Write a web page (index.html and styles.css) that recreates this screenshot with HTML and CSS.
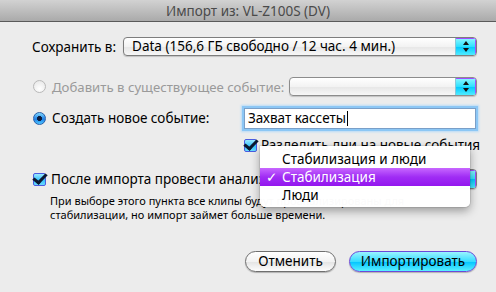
FILE: index.html
```html
<!DOCTYPE html>
<html lang="ru">
<head>
    <meta charset="UTF-8">
    <title>Импорт из: VL-Z100S (DV)</title>
    <link rel="stylesheet" href="styles.css">
</head>
<body>
    <div class="window">
        <header class="titlebar">Импорт из: VL-Z100S (DV)</header>
        <main class="content">
            <div class="row row-save">
                <span class="label">Сохранить в:</span>
                <div class="popup popup-wide">
                    <span class="popup-text">Data (156,6 ГБ свободно / 12 час. 4 мин.)</span>
                    <span class="popup-arrows"><i class="up"></i><i class="down"></i></span>
                </div>
            </div>

            <div class="row row-add">
                <span class="radio disabled"></span>
                <span class="label muted label-add">Добавить в существующее событие:</span>
                <div class="popup popup-event">
                    <span class="popup-text"></span>
                    <span class="popup-arrows"><i class="up"></i><i class="down"></i></span>
                </div>
            </div>

            <div class="row row-new">
                <span class="radio checked"></span>
                <span class="label label-new">Создать новое событие:</span>
                <div class="field">Захват кассеты<span class="caret"></span></div>
            </div>

            <div class="row row-split">
                <span class="checkbox"></span>
                <span class="label">Разделить дни на новые события</span>
            </div>

            <div class="row row-analyze">
                <span class="checkbox"></span>
                <span class="label label-analyze">После импорта провести анализ для:</span>
                <div class="popup popup-analyze">
                    <span class="popup-text">Стабилизация</span>
                    <span class="popup-arrows"><i class="up"></i><i class="down"></i></span>
                </div>
            </div>

            <p class="hint">При выборе этого пункта все клипы будут проанализированы для<br>стабилизации, но импорт займет больше времени.</p>

            <div class="buttons">
                <button class="btn">Отменить</button>
                <button class="btn btn-default">Импортировать</button>
            </div>

            <ul class="menu">
                <li>Стабилизация и люди</li>
                <li class="selected"><span class="tick">✓</span>Стабилизация</li>
                <li>Люди</li>
            </ul>
        </main>
    </div>
</body>
</html>
```

FILE: styles.css
```css
body {
    margin: 0;
    font-family: 'Noto Sans', 'DejaVu Sans', sans-serif;
    font-size: 13.5px;
    color: #000;
    background: #ececec;
}

.window {
    width: 496px;
    height: 292px;
    overflow: hidden;
    background: #ececec;
}

.titlebar {
    height: 22px;
    line-height: 22px;
    text-align: center;
    color: #4a4a4a;
    font-size: 13.5px;
    background: linear-gradient(#d2d2d2, #aaaaaa);
    border-bottom: 1px solid #5a5a5a;
    box-sizing: border-box;
}

.content {
    position: relative;
    padding: 15px 19px 0 32px;
}

.row {
    display: flex;
    align-items: center;
}

.label {
    white-space: nowrap;
}

.muted {
    color: #9a9a9a;
}

/* popup buttons */
.popup {
    display: flex;
    height: 19px;
    box-sizing: border-box;
    border: 1px solid #7d7d7d;
    border-radius: 4px;
    background: linear-gradient(#ffffff, #f3f3f3 50%, #e6e6e6 51%, #f7f7f7);
    box-shadow: 0 1px 1px rgba(0, 0, 0, 0.18);
    overflow: hidden;
}

.popup-text {
    flex: 1;
    padding-left: 8px;
    line-height: 17px;
    white-space: nowrap;
    overflow: hidden;
}

.popup-arrows {
    width: 20px;
    display: flex;
    flex-direction: column;
    align-items: center;
    justify-content: center;
    gap: 3px;
    background: linear-gradient(#8ff8ff, #2fe1ff 50%, #00c8ff 51%, #4fecff);
    border-left: 1px solid #8ac6d8;
    box-shadow: inset 0 1px 0 #a24dff, inset -1px 0 0 #a24dff;
}

.popup-arrows i {
    width: 0;
    height: 0;
    border-left: 3px solid transparent;
    border-right: 3px solid transparent;
}

.popup-arrows .up {
    border-bottom: 4px solid #111;
}

.popup-arrows .down {
    border-top: 4px solid #111;
}

.row-save .label {
    margin-right: 7px;
}

.popup-wide {
    flex: 1;
}

.row-add {
    margin-top: 21px;
}

.label-add {
    width: 237px;
    font-size: 13.2px;
}

.popup-event {
    flex: 1;
    border-color: #8c8c8c;
}

/* radio buttons */
.radio {
    width: 13px;
    height: 13px;
    box-sizing: border-box;
    border-radius: 50%;
    margin: 0 6px 0 1px;
    flex-shrink: 0;
}

.radio.disabled {
    border: 1px solid #b9b9b9;
    background: radial-gradient(circle at 50% 70%, #ffffff, #e4e4e4);
}

.radio.checked {
    border: 1px solid #2a5ea8;
    background: radial-gradient(circle, #0d1c3c 0 2.2px, transparent 2.8px),
        linear-gradient(#7fd9ff, #1f7fe6 55%, #4fc7ff);
}

.row-new {
    margin-top: 10px;
    height: 24px;
}

.label-new {
    width: 192px;
}

.field {
    flex: 1;
    height: 21px;
    box-sizing: border-box;
    margin-right: 1px;
    padding-left: 3px;
    line-height: 19px;
    background: #fff;
    border: 1px solid #7a9fc8;
    box-shadow: 0 0 0 2px #8cc7f5, 0 0 2px 3px #b7dbf8;
}

.caret {
    display: inline-block;
    width: 1px;
    height: 15px;
    margin-left: 1px;
    vertical-align: -3px;
    background: #000;
}

/* checkboxes */
.checkbox {
    position: relative;
    width: 13px;
    height: 13px;
    box-sizing: border-box;
    border: 1px solid #4a5ce0;
    border-radius: 2px;
    margin: 0 5px 0 1px;
    flex-shrink: 0;
    background: linear-gradient(#9ae8ff, #35c2fb 55%, #6adaff);
}

.checkbox::after {
    content: "";
    position: absolute;
    left: 2px;
    top: -3px;
    width: 5px;
    height: 10px;
    border-right: 3px solid #0c1830;
    border-bottom: 3px solid #0c1830;
    transform: rotate(38deg) skewX(-6deg);
}

.row-split {
    margin: 6px 0 0 211px;
}

.row-split .checkbox {
    margin-right: 4px;
}

.row-analyze {
    margin-top: 15px;
    height: 20px;
}

.label-analyze {
    width: 211px;
}

.popup-analyze {
    flex: 1;
    height: 20px;
}

.hint {
    margin: 5px 0 0 18px;
    font-size: 11px;
    line-height: 14px;
}

/* bottom buttons */
.buttons {
    display: flex;
    justify-content: flex-end;
    gap: 13px;
    margin-top: 29px;
}

.btn {
    height: 21px;
    border-radius: 11px;
    font-family: inherit;
    font-size: 13.5px;
    line-height: 17px;
    padding: 0;
    color: #000;
    box-shadow: 0 1px 1px rgba(0, 0, 0, 0.25);
}

.btn:first-child {
    width: 91px;
    border: 1px solid #6f6f6f;
    background: linear-gradient(#ffffff, #f2f2f2 50%, #e3e3e3 51%, #fdfdfd);
}

.btn-default {
    width: 128px;
    border: 1px solid #6a49d8;
    background: linear-gradient(#9af3ff, #36dcff 50%, #00c3ff 51%, #5af0ff);
}

/* opened menu */
.menu {
    position: absolute;
    left: 260px;
    top: 124px;
    width: 210px;
    margin: 0;
    padding: 4px 0 3px;
    list-style: none;
    font-size: 13.5px;
    background: rgba(255, 255, 255, 0.98);
    border-radius: 0 0 5px 5px;
    box-shadow: 0 4px 10px rgba(0, 0, 0, 0.35), 0 0 0 1px rgba(0, 0, 0, 0.08);
}

.menu li {
    height: 18px;
    line-height: 18px;
    padding-left: 22px;
    position: relative;
}

.menu .selected {
    color: #fff;
    background: linear-gradient(#c767ff, #a02cf4 50%, #9316ee);
}

.tick {
    position: absolute;
    left: 6px;
}
```
